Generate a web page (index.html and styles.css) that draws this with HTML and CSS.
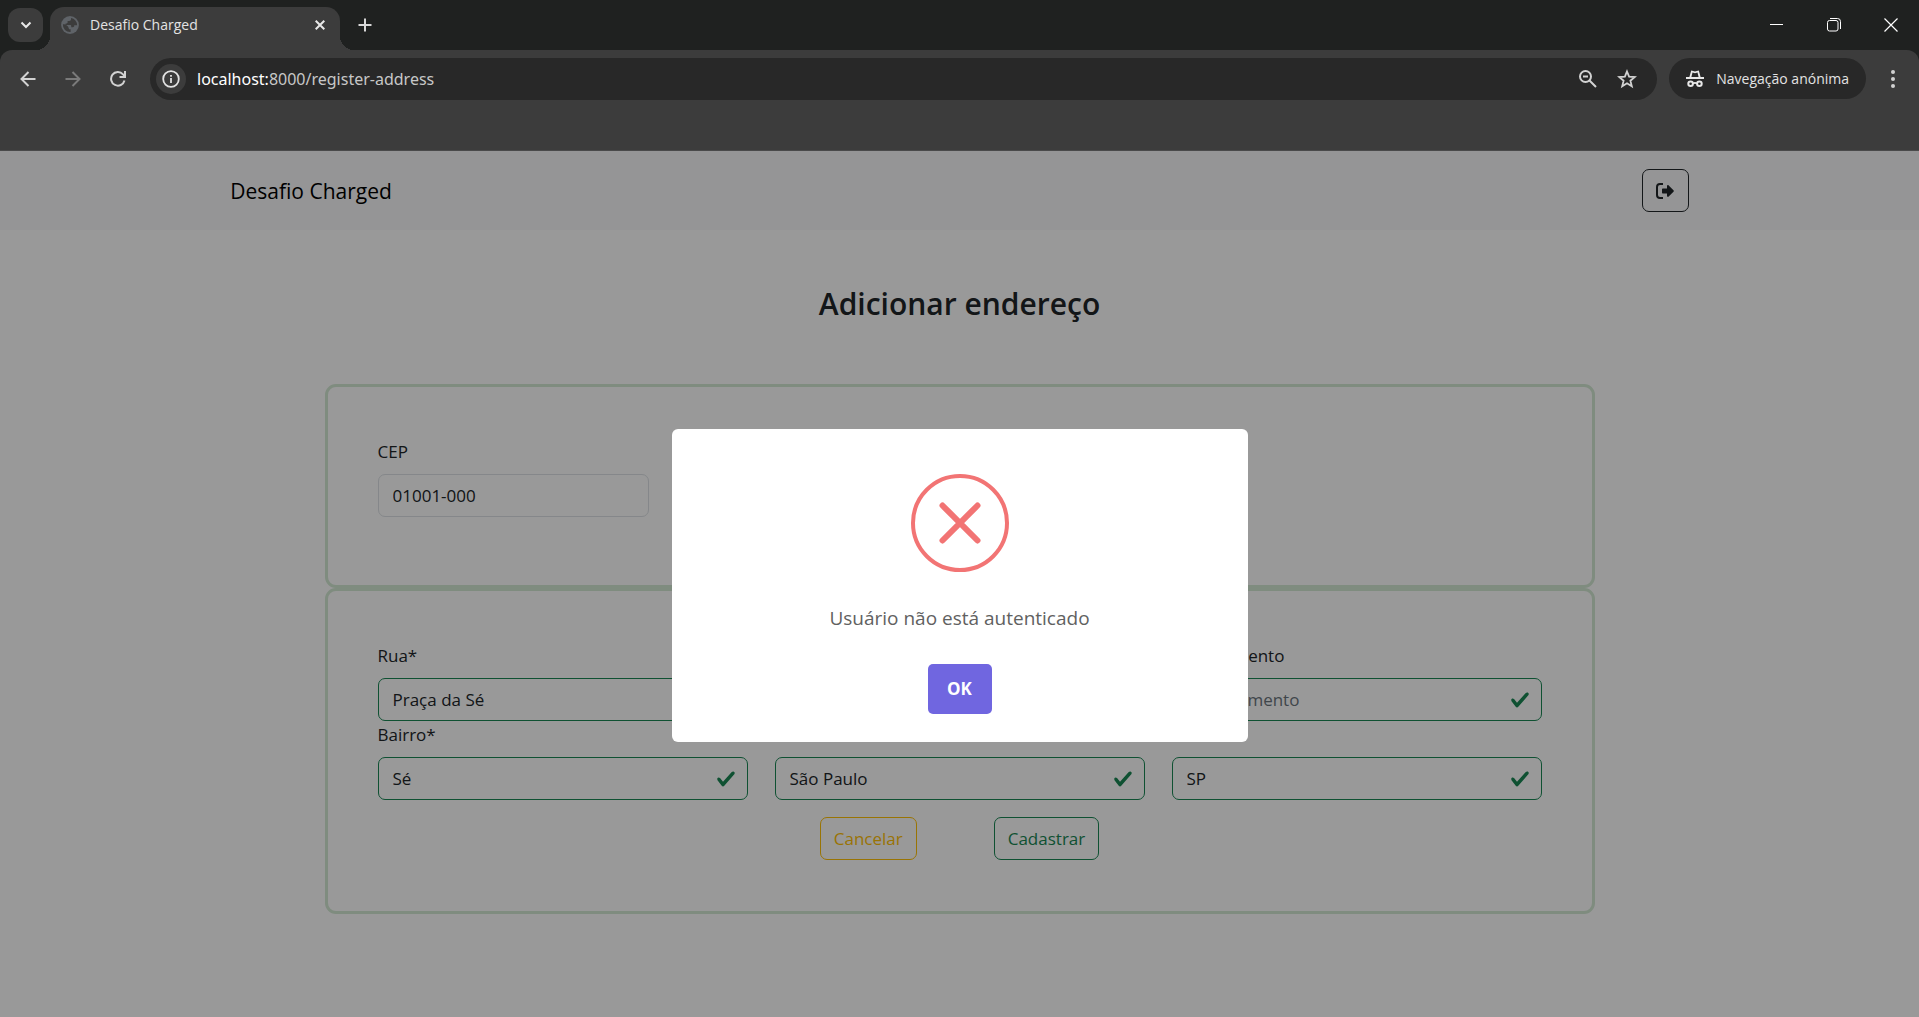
FILE: index.html
```html
<!DOCTYPE html>
<html lang="pt">
<head>
<meta charset="utf-8">
<title>Desafio Charged</title>
<link rel="stylesheet" href="styles.css">
</head>
<body>
<div class="browser">
  <header class="chrome">
    <div class="tabstrip">
      <button class="tab-search" aria-label="Pesquisar separadores"><svg width="12" height="8" viewBox="0 0 12 8"><path d="M1.500 1.500 6 6l4.500-4.500" fill="none" stroke="#e8e8e8" stroke-width="2"/></svg></button>
      <div class="tab">
        <svg width="18" height="18" viewBox="0 0 18 18"><circle cx="9" cy="9" r="8.900" fill="#5f6368"/><path d="M10 1.900v1.300c0 1-.8 1.700-1.700 1.700H6.600v1.600c0 .5-.4.9-.9.900H4.600v1.500h4.600c.6 0 1 .4 1 1v1.300h1.700c.8 0 1.300-.5 1.300-1.200V9.200h2.900A7.200 7.200 0 0 0 10 1.900zM1.900 8.300c1.500 0 3 .3 4.300 1.400 1 .9 1.800 2.600 1.800 3.600H9.600v2.800A7.200 7.200 0 0 1 1.900 8.300z" fill="#3c3c3c"/></svg>
        <span class="tab-title">Desafio Charged</span>
        <button class="plain" aria-label="Fechar"><svg width="10" height="10" viewBox="0 0 10 10"><path d="M.7.7l8.600 8.600M9.300.7.7 9.300" stroke="#e8e8e8" stroke-width="2"/></svg></button>
      </div>
      <button class="plain new-tab" aria-label="Novo separador"><svg width="14" height="14" viewBox="0 0 14 14"><path d="M7 .5v13M.5 7h13" stroke="#d8d8d8" stroke-width="2"/></svg></button>
      <div class="window-controls">
        <button class="plain" aria-label="Minimizar"><svg width="14" height="14" viewBox="0 0 14 14"><path d="M0 6.500h13" stroke="#fff"/></svg></button>
        <button class="plain" aria-label="Restaurar"><svg width="14" height="14" viewBox="0 0 14 14" fill="none" stroke="#fff"><rect x=".5" y="2.500" width="10.500" height="10.500" rx="2"/><path d="M3 .5h7.500a3 3 0 0 1 3 3V11"/></svg></button>
        <button class="plain" aria-label="Fechar janela"><svg width="14" height="14" viewBox="0 0 14 14"><path d="M.5.5l13 13M13.500.5l-13 13" stroke="#fff" stroke-width="1.200"/></svg></button>
      </div>
    </div>
    <div class="toolbar">
      <button class="plain" aria-label="Voltar"><svg width="16" height="16" viewBox="0 0 16 16" fill="none" stroke="#d2d2d2" stroke-width="2"><path d="M15.500 8H1.800M8.500 1 1.500 8l7 7"/></svg></button>
      <button class="plain" aria-label="Avançar"><svg width="16" height="16" viewBox="0 0 16 16" fill="none" stroke="#7a7a7a" stroke-width="2"><path d="M.5 8h13.700M7.500 1l7 7-7 7"/></svg></button>
      <button class="plain" aria-label="Atualizar"><svg width="16" height="16" viewBox="0 0 16 16" fill="none" stroke="#d2d2d2" stroke-width="2"><path d="M14.500 9.500A6.800 6.800 0 1 1 13 3.300L15 5.500M15 0v6H9.500"/></svg></button>
      <div class="omnibox">
        <button class="site-info" aria-label="Informações do site"><svg width="18" height="18" viewBox="0 0 18 18"><circle cx="9" cy="9" r="7.800" fill="none" stroke="#e3e3e3" stroke-width="1.800"/><path d="M9 8v5M9 5v1.800" stroke="#e3e3e3" stroke-width="1.800"/></svg></button>
        <span class="url"><span class="url-host">localhost:</span>8000/register-address</span>
        <button class="plain" aria-label="Zoom"><svg width="18" height="18" viewBox="0 0 18 18" fill="none" stroke="#d2d2d2" stroke-width="2"><circle cx="6.500" cy="6.500" r="5.500"/><path d="M10.500 10.500l6.500 6.500M4 6.500h5"/></svg></button>
        <button class="plain" aria-label="Favoritos"><svg width="20" height="20" viewBox="0 0 20 20" fill="none" stroke="#d2d2d2" stroke-width="1.800"><path d="M10 2.500l2.100 5.200 5.600.4-4.300 3.600 1.400 5.500-4.800-3-4.800 3 1.400-5.500-4.300-3.600 5.600-.4z"/></svg></button>
      </div>
      <div class="incognito">
        <svg width="18" height="18" viewBox="0 0 18 18"><path d="M5.200 0.500 9 1.400 12.800 .5 14.600 7H18v2H0V7h3.400zM6.500 2.600 5.400 7h7.200l-1.100-4.400L9 3.300z" fill="#e8e8e8" fill-rule="evenodd"/><path d="M6.800 13.500c1.400-.9 3-.9 4.400 0" fill="none" stroke="#e8e8e8" stroke-width="1.800"/><g fill="none" stroke="#e8e8e8" stroke-width="2"><circle cx="4.600" cy="13.800" r="2.300"/><circle cx="13.400" cy="13.800" r="2.300"/></g></svg>
        <span>Navegação anónima</span>
      </div>
      <button class="plain menu" aria-label="Menu"><svg width="4" height="18" viewBox="0 0 4 18" fill="#d2d2d2"><circle cx="2" cy="2" r="2"/><circle cx="2" cy="9" r="2"/><circle cx="2" cy="16" r="2"/></svg></button>
    </div>
  </header>

  <div class="viewport">
    <nav class="navbar">
      <div class="navbar-inner">
        <a class="brand" href="#">Desafio Charged</a>
        <button class="btn btn-dark" aria-label="Sair"><svg width="19" height="16" viewBox="0 0 19 16"><path d="M7 1H4a3 3 0 0 0-3 3v8a3 3 0 0 0 3 3h3" fill="none" stroke="#212529" stroke-width="2"/><path d="M7 5.500h4V3.200c0-1 1-1.400 1.700-.8l4.800 4.800c.5.500.5 1.100 0 1.600l-4.800 4.800c-.7.600-1.700.2-1.700-.8v-2.300H7c-.6 0-1-.4-1-1v-3c0-.6.4-1 1-1z" fill="#212529"/></svg></button>
      </div>
    </nav>
    <main class="content">
      <h1 class="title">Adicionar endereço</h1>
      <form class="address-form">
        <section class="card card-search">
          <div class="field field-cep"><label for="cep">CEP</label><input id="cep" class="control" value="01001-000"></div>
        </section>
        <section class="card">
          <div class="fields">
            <div class="field"><label for="rua">Rua*</label><input id="rua" class="control valid" value="Praça da Sé"></div>
            <div class="field"><label for="numero">Número</label><input id="numero" class="control valid" placeholder="Número"></div>
            <div class="field"><label for="complemento">Complemento</label><input id="complemento" class="control valid" placeholder="Complemento"></div>
            <div class="field"><label for="bairro">Bairro*</label><input id="bairro" class="control valid" value="Sé"></div>
            <div class="field"><label for="cidade">Cidade*</label><input id="cidade" class="control valid" value="São Paulo"></div>
            <div class="field"><label for="estado">UF*</label><input id="estado" class="control valid" value="SP"></div>
          </div>
          <div class="actions">
            <button type="button" class="btn btn-warning">Cancelar</button>
            <button type="button" class="btn btn-success">Cadastrar</button>
          </div>
        </section>
      </form>
    </main>
    <div class="backdrop">
      <div class="dialog" role="alertdialog" aria-describedby="message">
        <svg class="dialog-icon" width="98" height="98" viewBox="0 0 98 98" fill="none" stroke="#f27474"><circle cx="49" cy="49" r="47" stroke-width="4"/><path d="M31.500 31.500l35 35M66.500 31.500l-35 35" stroke-width="6" stroke-linecap="round"/></svg>
        <p id="message" class="message">Usuário não está autenticado</p>
        <button class="confirm">OK</button>
      </div>
    </div>
  </div>
</div>
</body>
</html>
```
FILE: styles.css
```css
* { box-sizing: border-box; }

body {
  margin: 0;
  font-family: "Open Sans", "Noto Sans", sans-serif;
  font-size: 17px;
  line-height: 26px;
  color: #212529;
}

button, input { font: inherit; color: inherit; }

svg { display: block; flex: none; }

.browser {
  display: flex;
  flex-direction: column;
  min-height: 100vh;
}

/* Browser frame */
.chrome { background: #1f2120; color: #e3e3e3; }

.plain {
  display: flex;
  padding: 0;
  border: 0;
  background: none;
}

.tabstrip {
  display: flex;
  align-items: center;
  height: 50px;
  padding: 0 21px 0 8px;
}

.tab-search {
  display: grid;
  place-items: center;
  width: 35px;
  height: 34px;
  padding: 0;
  border: 0;
  border-radius: 12px;
  background: #3c3c3c;
}

.tab {
  position: relative;
  display: flex;
  align-items: center;
  align-self: flex-end;
  gap: 11px;
  width: 290px;
  height: 43px;
  margin-left: 7px;
  padding: 0 15px 7px 11px;
  border-radius: 14px 14px 0 0;
  background: #3c3c3c;
}

.tab::before, .tab::after {
  content: "";
  position: absolute;
  bottom: 0;
  width: 14px;
  height: 14px;
}

.tab::before { right: 100%; background: radial-gradient(circle at 0 0, transparent 14px, #3c3c3c 14px); }
.tab::after { left: 100%; background: radial-gradient(circle at 100% 0, transparent 14px, #3c3c3c 14px); }

.tab-title { flex: 1; font-size: 14px; }
.new-tab { margin-left: 18px; }

.window-controls {
  display: flex;
  gap: 43px;
  margin-left: auto;
}

.toolbar {
  display: flex;
  align-items: flex-start;
  height: 101px;
  padding: 8px 24px 0 20px;
  gap: 29px;
  border-bottom: 1px solid #4a4a4a;
  border-radius: 12px 12px 0 0;
  background: #3c3c3c;
}

.toolbar > .plain { height: 42px; align-items: center; }

.omnibox {
  display: flex;
  flex: 1;
  align-items: center;
  gap: 20px;
  height: 42px;
  margin: 0 -17px 0 -5px;
  padding: 0 20px 0 6px;
  border-radius: 21px;
  background: #282828;
}

.site-info {
  display: grid;
  place-items: center;
  width: 30px;
  height: 30px;
  padding: 0;
  border: 0;
  border-radius: 50%;
  background: #3c3c3c;
}

.url {
  flex: 1;
  margin-left: -9px;
  font-family: "Noto Sans", sans-serif;
  font-size: 16px;
  color: #c7c7c7;
}

.url-host { color: #fff; }

.incognito {
  display: flex;
  align-items: center;
  gap: 12px;
  height: 41px;
  margin-right: -4px;
  padding: 0 17px;
  border-radius: 21px;
  background: #282828;
  font-size: 14px;
}

/* Page */
.viewport {
  position: relative;
  flex: 1;
  background: #fff;
}

.navbar { padding: 18px 0; background: #f8f9fa; }

.navbar-inner {
  display: flex;
  align-items: center;
  justify-content: space-between;
  width: 76%;
  margin: 0 auto;
}

.brand { font-size: 21px; color: #000; text-decoration: none; }

.btn {
  height: 43px;
  padding: 0 13px;
  border: 1px solid;
  border-radius: 7px;
  background: transparent;
}

.btn-dark { border-color: #212529; }
.btn-warning { color: #ffc107; }
.btn-success { color: #198754; }

.content { padding: 53px 0; }

.title {
  margin: 0 0 59px;
  font-size: 30px;
  font-weight: 600;
  line-height: 42px;
  text-align: center;
}

.address-form { max-width: 1270px; margin: 0 auto; }

.card {
  padding: 52px 50px 51px;
  border: 3px solid #d4e9d4;
  border-radius: 11px;
}

.card-search { padding-bottom: 68px; }

.fields {
  display: grid;
  grid-template-columns: repeat(3, 1fr);
  gap: 1px 27px;
}

.field label { display: block; margin-bottom: 9px; }
.field-cep { max-width: 271px; }

.control {
  display: block;
  width: 100%;
  height: 43px;
  padding: 0 14px;
  border: 1px solid #dee2e6;
  border-radius: 7px;
  background-color: #fff;
}

.control::placeholder { color: #6c757d; }

.valid {
  border-color: #198754;
  background-image: url("data:image/svg+xml,%3csvg xmlns='http://www.w3.org/2000/svg' viewBox='0 0 8 8'%3e%3cpath fill='%23198754' d='M2.3 6.73.6 4.53c-.4-1.04.46-1.4 1.100-.8l1.100 1.400 3.400-3.800c.6-.63 1.600-.27 1.200.7l-4 4.600c-.43.5-.8.4-1.100.1z'/%3e%3c/svg%3e");
  background-repeat: no-repeat;
  background-position: right 11px center;
  background-size: 20px 20px;
}

.actions {
  display: flex;
  justify-content: center;
  gap: 77px;
  margin-top: 17px;
}

/* Alert */
.backdrop {
  position: absolute;
  inset: 0;
  display: grid;
  place-items: center;
  padding-top: 2px;
  background: rgba(0, 0, 0, 0.4);
}

.dialog {
  display: flex;
  flex-direction: column;
  align-items: center;
  width: 576px;
  max-width: 100%;
  padding: 45px 20px 28px;
  border-radius: 6px;
  background: #fff;
}

.message {
  margin: 32px 0;
  font-size: 19px;
  line-height: 28px;
  color: #616161;
}

.confirm {
  width: 64px;
  height: 50px;
  padding: 0;
  border: 0;
  border-radius: 5px;
  background: #7066e0;
  color: #fff;
  font-weight: 700;
}
```
